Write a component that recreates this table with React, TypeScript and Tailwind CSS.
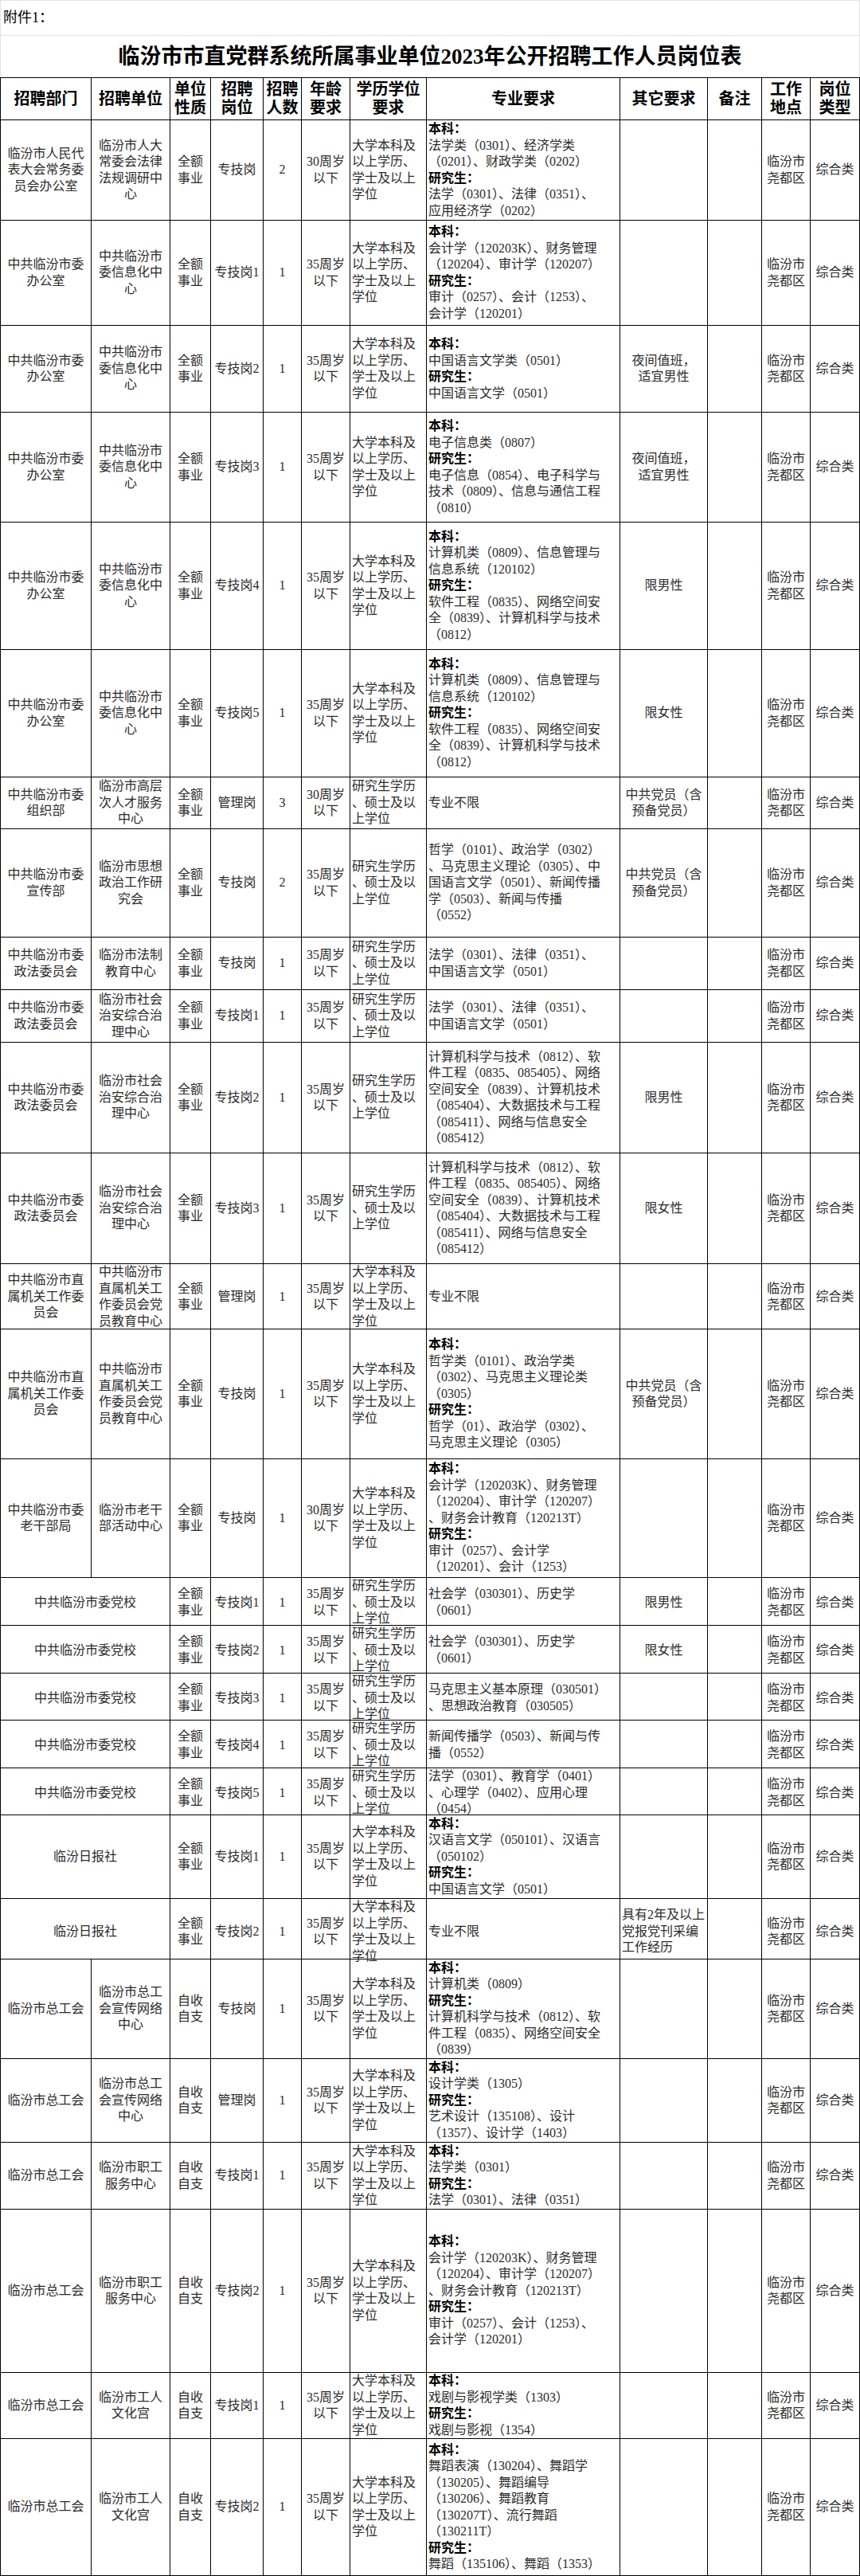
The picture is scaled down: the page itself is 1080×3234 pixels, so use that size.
import React from 'react'

type Row = {
  h: string
  dept?: string[]
  unit?: string[]
  merged?: string
  nature: string[]
  post: string
  num: string
  age: string[]
  edu: string[]
  major: string[]
  other?: string[]
  otherLeft?: boolean
}

const QE = ['全额', '事业']
const ZS = ['自收', '自支']
const A35 = ['35周岁', '以下']
const A30 = ['30周岁', '以下']
const EDU_B = ['大学本科及', '以上学历、', '学士及以上', '学位']
const EDU_G = ['研究生学历', '、硕士及以', '上学位']
const XXH = ['中共临汾市', '委信息化中', '心']
const BGS = ['中共临汾市委', '办公室']
const ZFW = ['中共临汾市委', '政法委员会']
const ZA = ['临汾市社会', '治安综合治', '理中心']
const ZSJG = ['中共临汾市直', '属机关工作委', '员会']
const ZSJGU = ['中共临汾市', '直属机关工', '作委员会党', '员教育中心']
const ZGH = ['临汾市总工会']
const DY = ['中共党员（含', '预备党员）']

const JSJ = [
  '本科：',
  '计算机类（0809）、信息管理与',
  '信息系统（120102）',
  '研究生：',
  '软件工程（0835）、网络空间安',
  '全（0839）、计算机科学与技术',
  '（0812）',
]

const WL = [
  '计算机科学与技术（0812）、软',
  '件工程（0835、085405）、网络',
  '空间安全（0839）、计算机技术',
  '（085404）、大数据技术与工程',
  '（085411）、网络与信息安全',
  '（085412）',
]

const rows: Row[] = [
  {
    h: 'h-[126px]',
    dept: ['临汾市人民代', '表大会常务委', '员会办公室'],
    unit: ['临汾市人大', '常委会法律', '法规调研中', '心'],
    nature: QE, post: '专技岗', num: '2', age: A30, edu: EDU_B,
    major: ['本科：', '法学类（0301）、经济学类', '（0201）、财政学类（0202）', '研究生：', '法学（0301）、法律（0351）、', '应用经济学（0202）'],
  },
  {
    h: 'h-[132px]', dept: BGS, unit: XXH, nature: QE, post: '专技岗1', num: '1', age: A35, edu: EDU_B,
    major: ['本科：', '会计学（120203K）、财务管理', '（120204）、审计学（120207）', '研究生：', '审计（0257）、会计（1253）、', '会计学（120201）'],
  },
  {
    h: 'h-[109px]', dept: BGS, unit: XXH, nature: QE, post: '专技岗2', num: '1', age: A35, edu: EDU_B,
    major: ['本科：', '中国语言文学类（0501）', '研究生：', '中国语言文学（0501）'],
    other: ['夜间值班，', '适宜男性'],
  },
  {
    h: 'h-[138px]', dept: BGS, unit: XXH, nature: QE, post: '专技岗3', num: '1', age: A35, edu: EDU_B,
    major: ['本科：', '电子信息类（0807）', '研究生：', '电子信息（0854）、电子科学与', '技术（0809）、信息与通信工程', '（0810）'],
    other: ['夜间值班，', '适宜男性'],
  },
  { h: 'h-[160px]', dept: BGS, unit: XXH, nature: QE, post: '专技岗4', num: '1', age: A35, edu: EDU_B, major: JSJ, other: ['限男性'] },
  { h: 'h-[160px]', dept: BGS, unit: XXH, nature: QE, post: '专技岗5', num: '1', age: A35, edu: EDU_B, major: JSJ, other: ['限女性'] },
  {
    h: 'h-[65px]', dept: ['中共临汾市委', '组织部'], unit: ['临汾市高层', '次人才服务', '中心'],
    nature: QE, post: '管理岗', num: '3', age: A30, edu: EDU_G, major: ['专业不限'], other: DY,
  },
  {
    h: 'h-[136px]', dept: ['中共临汾市委', '宣传部'], unit: ['临汾市思想', '政治工作研', '究会'],
    nature: QE, post: '专技岗', num: '2', age: A35, edu: EDU_G,
    major: ['哲学（0101）、政治学（0302）', '、马克思主义理论（0305）、中', '国语言文学（0501）、新闻传播', '学（0503）、新闻与传播', '（0552）'],
    other: DY,
  },
  {
    h: 'h-[66px]', dept: ZFW, unit: ['临汾市法制', '教育中心'], nature: QE, post: '专技岗', num: '1', age: A35, edu: EDU_G,
    major: ['法学（0301）、法律（0351）、', '中国语言文学（0501）'],
  },
  {
    h: 'h-[66px]', dept: ZFW, unit: ZA, nature: QE, post: '专技岗1', num: '1', age: A35, edu: EDU_G,
    major: ['法学（0301）、法律（0351）、', '中国语言文学（0501）'],
  },
  { h: 'h-[139px]', dept: ZFW, unit: ZA, nature: QE, post: '专技岗2', num: '1', age: A35, edu: EDU_G, major: WL, other: ['限男性'] },
  { h: 'h-[139px]', dept: ZFW, unit: ZA, nature: QE, post: '专技岗3', num: '1', age: A35, edu: EDU_G, major: WL, other: ['限女性'] },
  { h: 'h-[82px]', dept: ZSJG, unit: ZSJGU, nature: QE, post: '管理岗', num: '1', age: A35, edu: EDU_B, major: ['专业不限'] },
  {
    h: 'h-[163px]', dept: ZSJG, unit: ZSJGU, nature: QE, post: '专技岗', num: '1', age: A35, edu: EDU_B,
    major: ['本科：', '哲学类（0101）、政治学类', '（0302）、马克思主义理论类', '（0305）', '研究生：', '哲学（01）、政治学（0302）、', '马克思主义理论（0305）'],
    other: DY,
  },
  {
    h: 'h-[149px]', dept: ['中共临汾市委', '老干部局'], unit: ['临汾市老干', '部活动中心'],
    nature: QE, post: '专技岗', num: '1', age: A30, edu: EDU_B,
    major: ['本科：', '会计学（120203K）、财务管理', '（120204）、审计学（120207）', '、财务会计教育（120213T）', '研究生：', '审计（0257）、会计学', '（120201）、会计（1253）'],
  },
  { h: 'h-[60px]', merged: '中共临汾市委党校', nature: QE, post: '专技岗1', num: '1', age: A35, edu: EDU_G, major: ['社会学（030301）、历史学', '（0601）'], other: ['限男性'] },
  { h: 'h-[60px]', merged: '中共临汾市委党校', nature: QE, post: '专技岗2', num: '1', age: A35, edu: EDU_G, major: ['社会学（030301）、历史学', '（0601）'], other: ['限女性'] },
  { h: 'h-[59px]', merged: '中共临汾市委党校', nature: QE, post: '专技岗3', num: '1', age: A35, edu: EDU_G, major: ['马克思主义基本原理（030501）', '、思想政治教育（030505）'] },
  { h: 'h-[60px]', merged: '中共临汾市委党校', nature: QE, post: '专技岗4', num: '1', age: A35, edu: EDU_G, major: ['新闻传播学（0503）、新闻与传', '播（0552）'] },
  { h: 'h-[59px]', merged: '中共临汾市委党校', nature: QE, post: '专技岗5', num: '1', age: A35, edu: EDU_G, major: ['法学（0301）、教育学（0401）', '、心理学（0402）、应用心理', '（0454）'] },
  {
    h: 'h-[105px]', merged: '临汾日报社', nature: QE, post: '专技岗1', num: '1', age: A35, edu: EDU_B,
    major: ['本科：', '汉语言文学（050101）、汉语言', '（050102）', '研究生：', '中国语言文学（0501）'],
  },
  {
    h: 'h-[76px]', merged: '临汾日报社', nature: QE, post: '专技岗2', num: '1', age: A35, edu: EDU_B,
    major: ['专业不限'], other: ['具有2年及以上', '党报党刊采编', '工作经历'], otherLeft: true,
  },
  {
    h: 'h-[125px]', dept: ZGH, unit: ['临汾市总工', '会宣传网络', '中心'], nature: ZS, post: '专技岗', num: '1', age: A35, edu: EDU_B,
    major: ['本科：', '计算机类（0809）', '研究生：', '计算机科学与技术（0812）、软', '件工程（0835）、网络空间安全', '（0839）'],
  },
  {
    h: 'h-[105px]', dept: ZGH, unit: ['临汾市总工', '会宣传网络', '中心'], nature: ZS, post: '管理岗', num: '1', age: A35, edu: EDU_B,
    major: ['本科：', '设计学类（1305）', '研究生：', '艺术设计（135108）、设计', '（1357）、设计学（1403）'],
  },
  {
    h: 'h-[84px]', dept: ZGH, unit: ['临汾市职工', '服务中心'], nature: ZS, post: '专技岗1', num: '1', age: A35, edu: EDU_B,
    major: ['本科：', '法学类（0301）', '研究生：', '法学（0301）、法律（0351）'],
  },
  {
    h: 'h-[205px]', dept: ZGH, unit: ['临汾市职工', '服务中心'], nature: ZS, post: '专技岗2', num: '1', age: A35, edu: EDU_B,
    major: ['本科：', '会计学（120203K）、财务管理', '（120204）、审计学（120207）', '、财务会计教育（120213T）', '研究生：', '审计（0257）、会计（1253）、', '会计学（120201）'],
  },
  {
    h: 'h-[83px]', dept: ZGH, unit: ['临汾市工人', '文化宫'], nature: ZS, post: '专技岗1', num: '1', age: A35, edu: EDU_B,
    major: ['本科：', '戏剧与影视学类（1303）', '研究生：', '戏剧与影视（1354）'],
  },
  {
    h: 'h-[172px]', dept: ZGH, unit: ['临汾市工人', '文化宫'], nature: ZS, post: '专技岗2', num: '1', age: A35, edu: EDU_B,
    major: ['本科：', '舞蹈表演（130204）、舞蹈学', '（130205）、舞蹈编导', '（130206）、舞蹈教育', '（130207T）、流行舞蹈', '（130211T）', '研究生：', '舞蹈（135106）、舞蹈（1353）'],
  },
]

const GRID = 'grid grid-cols-[114px_99px_51px_66px_48px_61px_96px_243px_110px_68px_61px_62px]'

function Cell({
  lines = [],
  left = false,
  span = false,
}: {
  lines?: string[]
  left?: boolean
  span?: boolean
}) {
  return (
    <div
      className={
        'flex flex-col justify-center border-r border-black min-w-0 ' +
        (left ? 'items-start text-left pl-[2px] ' : 'items-center text-center ') +
        (span ? 'col-span-2' : '')
      }
    >
      {lines.map((l, i) => (
        <div
          key={i}
          className={
            'whitespace-nowrap ' +
            (l === '本科：' || l === '研究生：' ? 'font-bold text-black' : '')
          }
        >
          {l}
        </div>
      ))}
    </div>
  )
}

const headers: { lines: string[] }[] = [
  { lines: ['招聘部门'] },
  { lines: ['招聘单位'] },
  { lines: ['单位', '性质'] },
  { lines: ['招聘', '岗位'] },
  { lines: ['招聘', '人数'] },
  { lines: ['年龄', '要求'] },
  { lines: ['学历学位', '要求'] },
  { lines: ['专业要求'] },
  { lines: ['其它要求'] },
  { lines: ['备注'] },
  { lines: ['工作', '地点'] },
  { lines: ['岗位', '类型'] },
]

export default function App() {
  return (
    <div className="w-[1080px] h-[3234px] bg-white text-[#2b2b2b] font-['Liberation_Serif','Noto_Sans_CJK_SC',serif]">
      {/* 附件 */}
      <div className="h-[45px] flex items-center pl-[3px] text-[18px] text-black border-t border-x border-b border-[#e2e2e2]">
        附件1：
      </div>

      {/* 标题 */}
      <div className="h-[52px] flex items-center justify-center text-[27px] font-bold text-black border-x border-[#e2e2e2]">
        临汾市市直党群系统所属事业单位2023年公开招聘工作人员岗位表
      </div>

      {/* 表格 */}
      <div className="border-t border-l border-black">
        <div className={GRID + ' h-[53px] border-b border-black text-[20px] leading-[23px] font-bold text-black'}>
          {headers.map((h, i) => (
            <Cell key={i} lines={h.lines} />
          ))}
        </div>

        {rows.map((r, i) => (
          <div key={i} className={GRID + ' border-b border-black text-[16px] leading-[20.5px] ' + r.h}>
            {r.merged ? (
              <Cell lines={[r.merged]} span />
            ) : (
              <>
                <Cell lines={r.dept} />
                <Cell lines={r.unit} />
              </>
            )}
            <Cell lines={r.nature} />
            <Cell lines={[r.post]} />
            <Cell lines={[r.num]} />
            <Cell lines={r.age} />
            <Cell lines={r.edu} left />
            <Cell lines={r.major} left />
            <Cell lines={r.other} left={r.otherLeft} />
            <Cell />
            <Cell lines={['临汾市', '尧都区']} />
            <Cell lines={['综合类']} />
          </div>
        ))}
      </div>
    </div>
  )
}
